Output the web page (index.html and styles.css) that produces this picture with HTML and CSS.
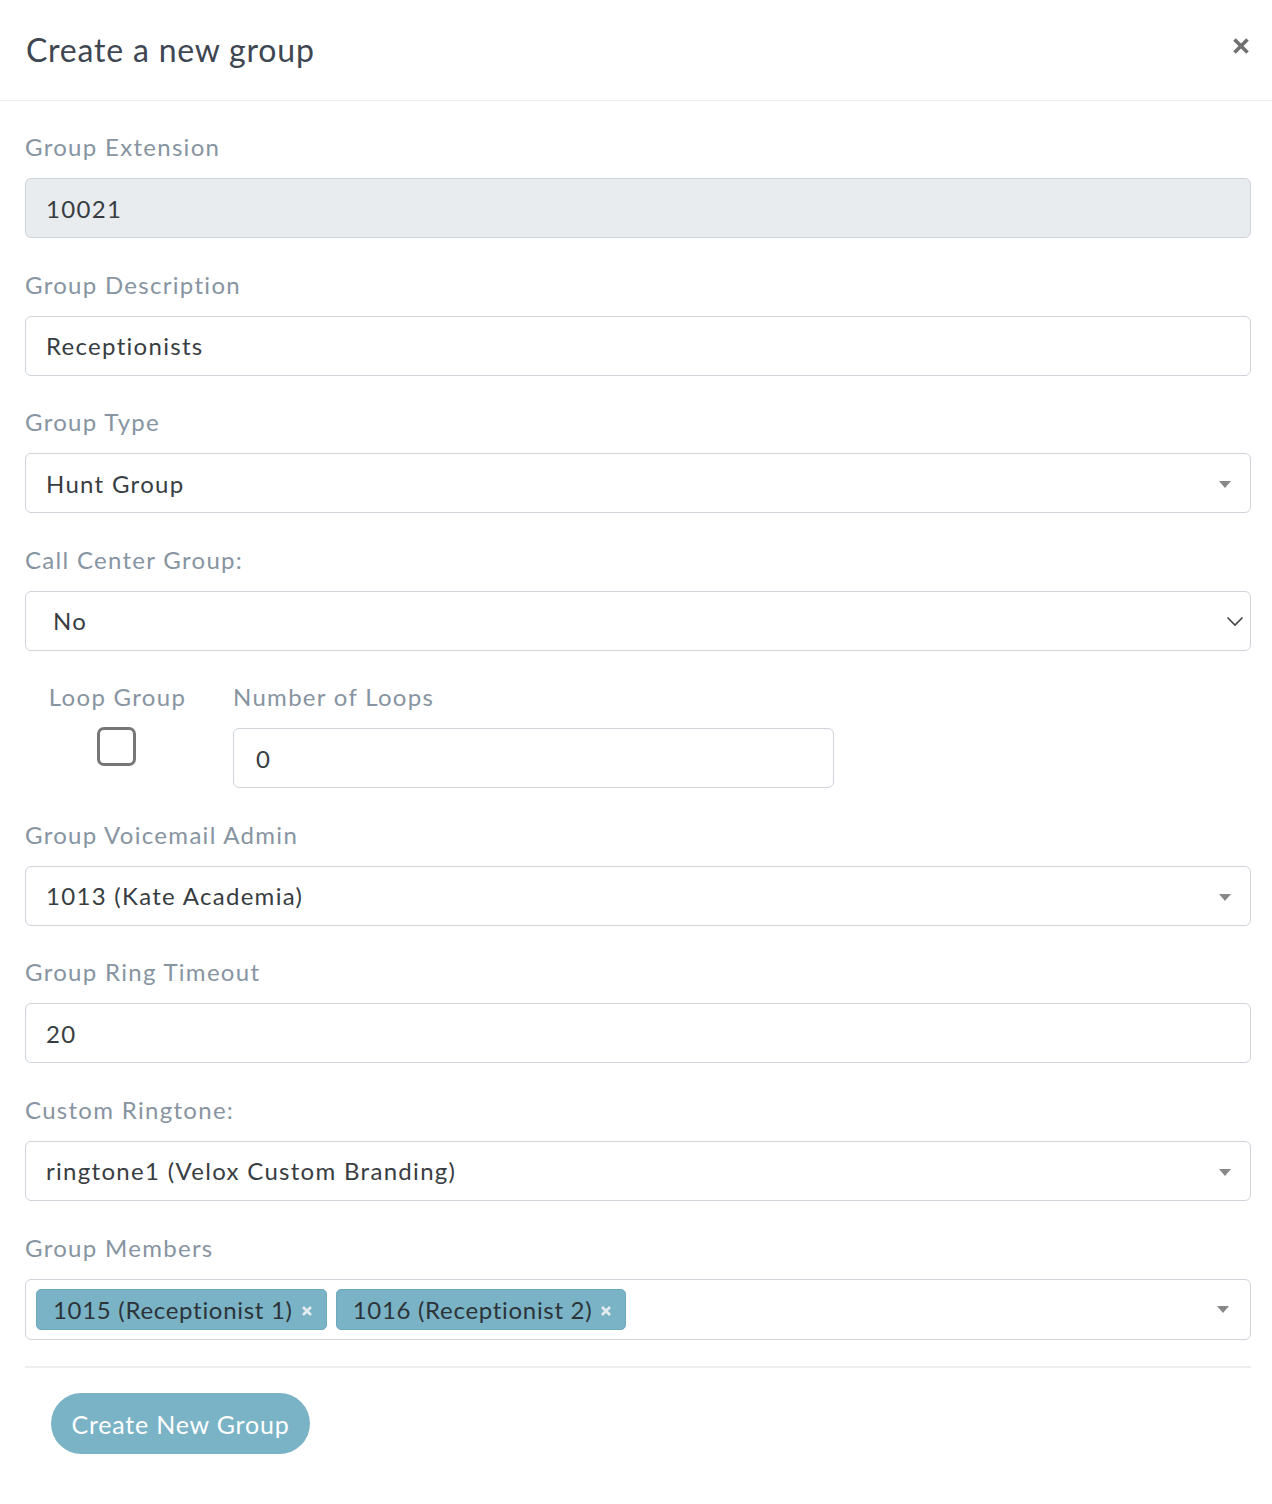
FILE: index.html
```html
<!DOCTYPE html>
<html>
<head>
<meta charset="utf-8">
<link rel="stylesheet" href="styles.css">
</head>
<body>
<div class="modal">
  <div class="modal-header">
    <h4 class="modal-title">Create a new group</h4>
    <button class="close" aria-label="Close">
      <svg width="16" height="16" viewBox="0 0 16 16"><path d="M1.5 1.5 L14.5 14.5 M14.5 1.5 L1.5 14.5" stroke="#707070" stroke-width="3.6" stroke-linecap="butt"/></svg>
    </button>
  </div>
  <div class="modal-body">
    <div class="field">
      <label class="label">Group Extension</label>
      <div class="control readonly">10021</div>
    </div>
    <div class="field">
      <label class="label">Group Description</label>
      <div class="control">Receptionists</div>
    </div>
    <div class="field">
      <label class="label">Group Type</label>
      <div class="control select2">Hunt Group<span class="tri"></span></div>
    </div>
    <div class="field">
      <label class="label">Call Center Group:</label>
      <div class="control native">No
        <svg class="chev" width="18" height="11" viewBox="0 0 18 11"><path d="M1.5 1.5 L9 9 L16.5 1.5" fill="none" stroke="#444" stroke-width="1.6"/></svg>
      </div>
    </div>
    <div class="field loop-row">
      <div class="loop-col">
        <label class="label">Loop Group</label>
        <span class="checkbox"></span>
      </div>
      <div class="loops-col">
        <label class="label">Number of Loops</label>
        <div class="control loops">0</div>
      </div>
    </div>
    <div class="field">
      <label class="label">Group Voicemail Admin</label>
      <div class="control select2">1013 (Kate Academia)<span class="tri"></span></div>
    </div>
    <div class="field">
      <label class="label">Group Ring Timeout</label>
      <div class="control">20</div>
    </div>
    <div class="field">
      <label class="label">Custom Ringtone:</label>
      <div class="control select2">ringtone1 (Velox Custom Branding)<span class="tri"></span></div>
    </div>
    <div class="field last">
      <label class="label">Group Members</label>
      <div class="control multi">
        <span class="tag">1015 (Receptionist 1)<svg class="x" width="10" height="10" viewBox="0 0 10 10"><path d="M1 1 L9 9 M9 1 L1 9" stroke="#e4ecef" stroke-width="2.6"/></svg></span>
        <span class="tag">1016 (Receptionist 2)<svg class="x" width="10" height="10" viewBox="0 0 10 10"><path d="M1 1 L9 9 M9 1 L1 9" stroke="#e4ecef" stroke-width="2.6"/></svg></span>
        <span class="tri"></span>
      </div>
    </div>
    <div class="modal-footer">
      <button class="btn">Create New Group</button>
    </div>
  </div>
</div>
</body>
</html>
```

FILE: styles.css
```css
* { box-sizing: border-box; }
html, body { margin: 0; padding: 0; background: #fff; }
body {
  font-family: "Lato", "Open Sans", sans-serif;
  color: #3a3f45;
}
.modal { width: 1272px; min-height: 1504px; background: #fff; }
.modal-header {
  height: 101px;
  border-bottom: 1px solid #e9ecef;
  display: flex;
  align-items: center;
  justify-content: space-between;
  padding: 0 23px 0 26px;
}
.modal-title {
  margin: 0;
  font-family: "Lato", sans-serif;
  font-weight: 400;
  font-size: 32px;
  color: #3e4651;
  letter-spacing: 0.8px;
  position: relative;
  top: -1px;
}
.close {
  border: 0; background: none; padding: 0; margin: 0;
  width: 16px; height: 16px;
  display: block;
  position: relative; top: -4px;
}
.close svg { display: block; }
.modal-body { padding: 28px 21px 0 25px; }
.field { margin-bottom: 28.5px; }
.field.last { padding-top: 1px; margin-bottom: 26px; }
.label {
  display: block;
  font-size: 24px;
  line-height: 36px;
  color: #8794a1;
  margin-bottom: 13px;
  letter-spacing: 1.3px;
}
.control {
  position: relative;
  height: 60px;
  border: 1px solid #ced4da;
  border-radius: 6px;
  padding: 0 20px;
  display: flex;
  align-items: center;
  font-size: 24px;
  color: #383d42;
  letter-spacing: 1.3px;
  background: #fff;
}
.control.readonly { background: #e9ecef; }
.control.native { padding-left: 27px; }
.chev { position: absolute; right: 6px; top: 24px; }
.tri {
  position: absolute;
  right: 19px;
  top: 27px;
  width: 0; height: 0;
  border-left: 6px solid transparent;
  border-right: 6px solid transparent;
  border-top: 7px solid #888;
}
.loop-row { display: flex; align-items: flex-start; gap: 23px; }
.loop-col { width: 185px; display: flex; flex-direction: column; align-items: center; }
.loop-col .label { margin-bottom: 12px; }
.checkbox {
  display: block;
  width: 39px; height: 39px;
  border: 3px solid #767676;
  border-radius: 7px;
  margin-left: -3px;
}
.loops-col { width: 601px; }
.control.loops { padding-left: 22px; }
.control.multi { height: 61px; padding: 0 10px; gap: 9px; }
.tag {
  display: inline-flex;
  align-items: center;
  height: 41px;
  background: #7ab3c6;
  border: 1px solid #6fa9bc;
  border-radius: 5px;
  padding: 0 14px 0 16px;
  color: #2c3338;
  font-size: 24px;
  letter-spacing: 0.7px;
}
.tag .x { margin-left: 9px; display: block; position: relative; top: 1px; }
.control.multi .tri { right: 21px; top: 26px; }
.modal-footer {
  border-top: 2px solid #eceef0;
  padding: 25px 0 50px 26px;
}
.btn {
  height: 61px;
  border: 0;
  border-radius: 31px;
  background: #7ab3c6;
  color: #fff;
  font-family: "Lato", sans-serif;
  font-size: 25px;
  padding: 0;
  letter-spacing: 0.8px;
  width: 259px;
}
```
